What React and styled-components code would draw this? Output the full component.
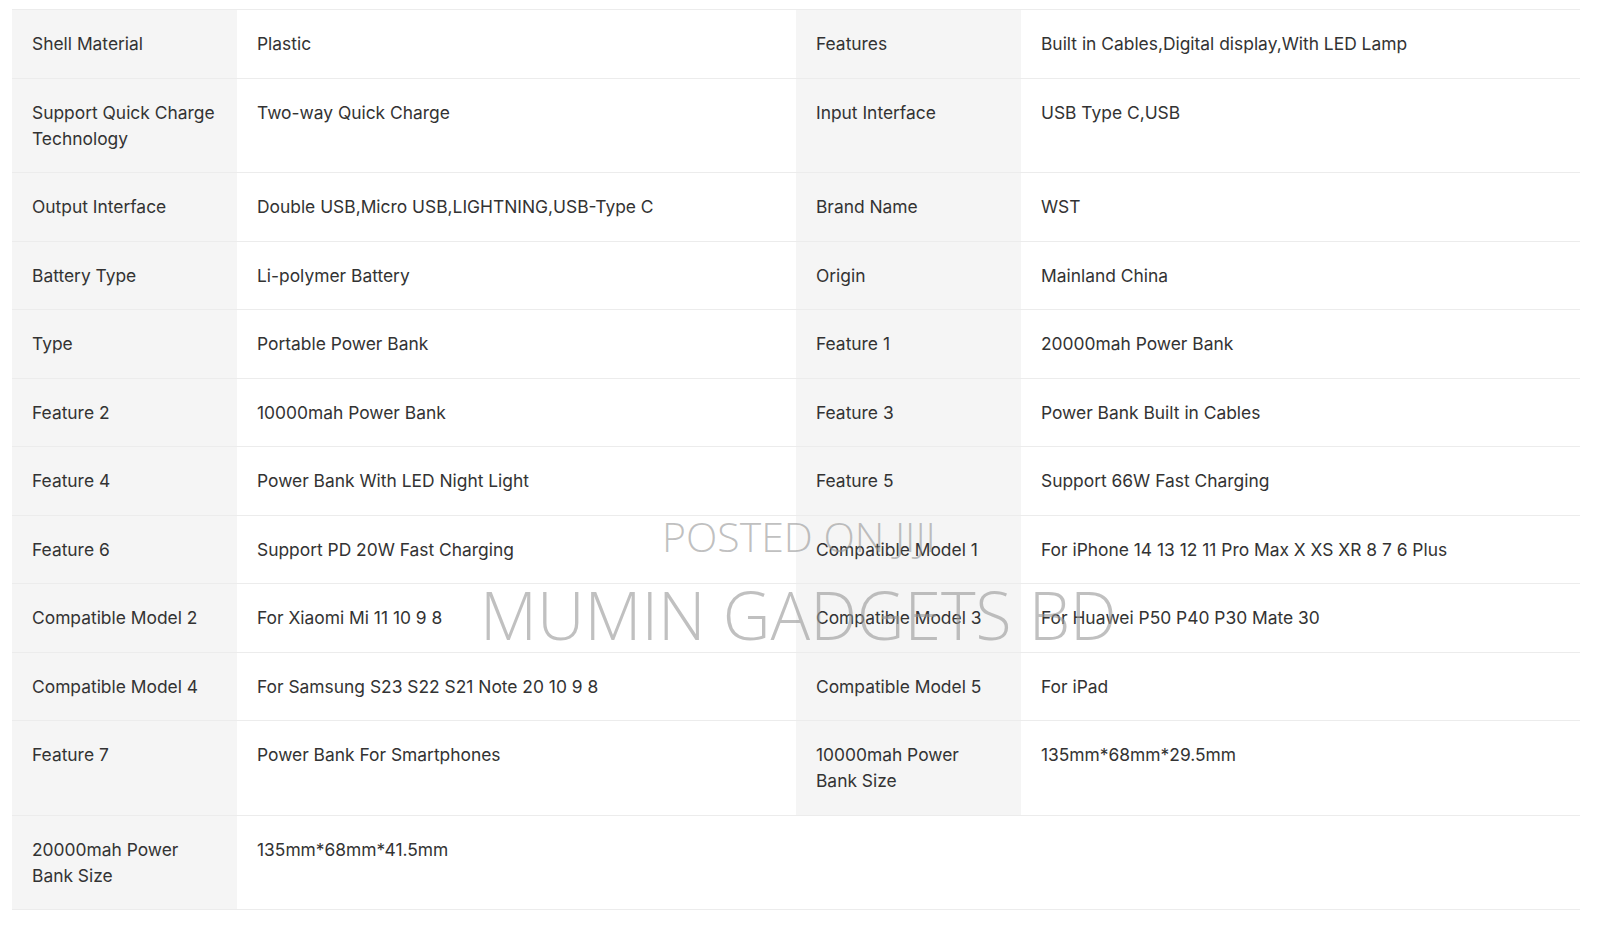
import React from 'react'
import styled, { createGlobalStyle } from 'styled-components'

const Global = createGlobalStyle`
  html, body { margin: 0; padding: 0; background: #fff; }
  body { font-family: Inter, "Open Sans", sans-serif; }
`

const Page = styled.div`
  padding: 9px 20px 0 12px;
`

const Wrap = styled.div`
  position: relative;
`

const Table = styled.table`
  width: 100%;
  border-collapse: collapse;
  table-layout: fixed;
  border-top: 1px solid #ececec;
`

const Row = styled.tr`
  border-bottom: 1px solid #ececec;
`

const Cell = styled.td`
  padding: 21px 20px 20.5px;
  vertical-align: top;
  font-size: 17.4px;
  line-height: 26px;
  color: #333;
  background: ${p => (p.$label ? '#f5f5f5' : '#fff')};
`

const Watermark = styled.div`
  position: absolute;
  left: ${p => p.$x}px;
  top: ${p => p.$y}px;
  font-family: "Open Sans", sans-serif;
  font-weight: 300;
  font-size: ${p => p.$size}px;
  line-height: 1;
  color: rgba(150, 150, 150, 0.6);
  white-space: nowrap;
  pointer-events: none;
`

const rows = [
  ['Shell Material', 'Plastic', 'Features', 'Built in Cables,Digital display,With LED Lamp'],
  ['Support Quick Charge Technology', 'Two-way Quick Charge', 'Input Interface', 'USB Type C,USB'],
  ['Output Interface', 'Double USB,Micro USB,LIGHTNING,USB-Type C', 'Brand Name', 'WST'],
  ['Battery Type', 'Li-polymer Battery', 'Origin', 'Mainland China'],
  ['Type', 'Portable Power Bank', 'Feature 1', '20000mah Power Bank'],
  ['Feature 2', '10000mah Power Bank', 'Feature 3', 'Power Bank Built in Cables'],
  ['Feature 4', 'Power Bank With LED Night Light', 'Feature 5', 'Support 66W Fast Charging'],
  ['Feature 6', 'Support PD 20W Fast Charging', 'Compatible Model 1', 'For iPhone 14 13 12 11 Pro Max X XS XR 8 7 6 Plus'],
  ['Compatible Model 2', 'For Xiaomi Mi 11 10 9 8', 'Compatible Model 3', 'For Huawei P50 P40 P30 Mate 30'],
  ['Compatible Model 4', 'For Samsung S23 S22 S21 Note 20 10 9 8', 'Compatible Model 5', 'For iPad'],
  ['Feature 7', 'Power Bank For Smartphones', '10000mah Power Bank Size', '135mm*68mm*29.5mm'],
  ['20000mah Power Bank Size', '135mm*68mm*41.5mm'],
]

export default function App() {
  return (
    <Page>
      <Global />
      <Wrap>
        <Table>
          <colgroup>
            <col style={{ width: '14.35%' }} />
            <col style={{ width: '35.65%' }} />
            <col style={{ width: '14.35%' }} />
            <col style={{ width: '35.65%' }} />
          </colgroup>
          <tbody>
            {rows.map((r, i) => (
              <Row key={i}>
                <Cell $label>{r[0]}</Cell>
                <Cell>{r[1]}</Cell>
                {r.length > 2 ? (
                  <>
                    <Cell $label>{r[2]}</Cell>
                    <Cell>{r[3]}</Cell>
                  </>
                ) : (
                  <Cell colSpan={2} />
                )}
              </Row>
            ))}
          </tbody>
        </Table>
        <Watermark $x={650} $y={507} $size={41}>POSTED ON JIJI</Watermark>
        <Watermark $x={468} $y={572} $size={66}>MUMIN GADGETS BD</Watermark>
      </Wrap>
    </Page>
  )
}
